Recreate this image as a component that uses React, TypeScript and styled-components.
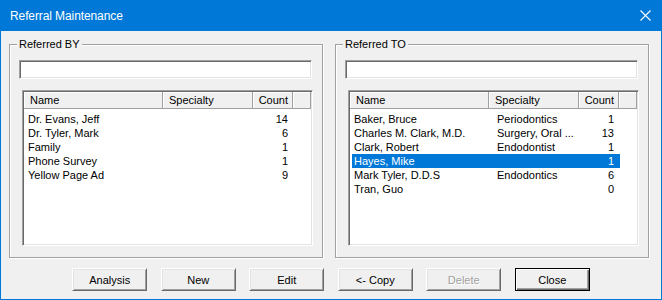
import React from 'react';
import styled, { createGlobalStyle } from 'styled-components';

const GlobalStyle = createGlobalStyle`
  html, body {
    margin: 0;
    padding: 0;
    background: #f0f0f0;
  }
  body {
    font-family: 'Liberation Sans', Arial, sans-serif;
    font-size: 11px;
    color: #000;
  }
`;

const Window = styled.div`
  width: 662px;
  height: 300px;
  box-sizing: border-box;
  border: 1px solid #0078d7;
  border-top: none;
  background: #f0f0f0;
  display: flex;
  flex-direction: column;
`;

const TitleBar = styled.div`
  height: 31px;
  flex-shrink: 0;
  background: #0078d7;
  color: #fff;
  display: flex;
  align-items: center;
  padding-left: 9px;
  font-size: 12px;
  letter-spacing: -0.1px;
`;

const CloseGlyph = styled.svg`
  margin-left: auto;
  margin-right: 10px;
  width: 11px;
  height: 11px;
`;

const Body = styled.div`
  flex: 1;
  display: flex;
  flex-direction: column;
  padding: 13px 0 0 8px;
`;

const Groups = styled.div`
  display: flex;
  gap: 12px;
`;

const Group = styled.div`
  position: relative;
  width: 314px;
  height: 214px;
  box-sizing: border-box;
  border: 1px solid #a0a0a0;
  box-shadow: inset 1px 1px 0 #fff, 1px 1px 0 #fff;
  padding: 15px 10px 0 9px;
  display: flex;
  flex-direction: column;
`;

const Legend = styled.span`
  position: absolute;
  top: -8px;
  left: 7px;
  padding: 0 2px;
  background: #f0f0f0;
  line-height: 14px;
`;

const TextBox = styled.input`
  height: 19px;
  box-sizing: border-box;
  margin: 0;
  width: 100%;
  border: 1px solid;
  border-color: #a0a0a0 #fff #fff #a0a0a0;
  box-shadow: inset 1px 1px 0 #696969, inset -1px -1px 0 #e3e3e3;
  background: #fff;
  outline: none;
  padding: 0 4px;
  font: inherit;
`;

const ListView = styled.div`
  margin: 11px 0 0 3px;
  width: 291px;
  height: 156px;
  box-sizing: border-box;
  border: 1px solid;
  border-color: #a0a0a0 #fff #fff #a0a0a0;
  box-shadow: inset 1px 1px 0 #696969, inset -1px -1px 0 #e3e3e3;
  background: #fff;
  padding: 1px;
  overflow: hidden;
`;

const HeaderRow = styled.div`
  display: grid;
  grid-template-columns: 139px 90px 40px 1fr;
  height: 17px;
  background: #f0f0f0;
`;

const HeaderCell = styled.div<{ $align?: 'left' | 'right' }>`
  box-sizing: border-box;
  height: 17px;
  line-height: 16px;
  text-align: ${p => p.$align || 'left'};
  padding: ${p => (p.$align === 'right' ? '0 4px 0 0' : '0 0 0 6px')};
  border-right: 1px solid #a0a0a0;
  border-bottom: 1px solid #a0a0a0;
  box-shadow: inset 1px 1px 0 #fff;
  white-space: nowrap;
  overflow: hidden;
`;

const Rows = styled.div`
  padding-top: 3px;
`;

const Row = styled.div<{ $selected?: boolean }>`
  display: grid;
  grid-template-columns: 137px 90px 41px;
  width: 268px;
  margin-left: 2px;
  height: 14px;
  line-height: 14px;
  background: ${p => (p.$selected ? '#0078d7' : 'transparent')};
  color: ${p => (p.$selected ? '#fff' : '#000')};
`;

const Cell = styled.div<{ $align?: 'left' | 'right'; $pad: number }>`
  text-align: ${p => p.$align || 'left'};
  padding-left: ${p => (p.$align === 'right' ? 0 : p.$pad)}px;
  padding-right: ${p => (p.$align === 'right' ? p.$pad : 0)}px;
  white-space: nowrap;
  overflow: hidden;
`;

const Footer = styled.div`
  display: flex;
  justify-content: center;
  gap: 13.5px;
  margin-top: 10px;
  padding-right: 8px;
`;

const Button = styled.button<{ $default?: boolean }>`
  width: 75px;
  height: 23px;
  box-sizing: border-box;
  margin: 0;
  padding: 0;
  background: #f0f0f0;
  font: inherit;
  color: #000;
  border: 1px solid;
  border-color: ${p => (p.$default ? '#000' : '#fff #696969 #696969 #fff')};
  box-shadow: ${p =>
    p.$default
      ? 'inset 1px 1px 0 #fff, inset -1px -1px 0 #696969, inset -2px -2px 0 #a0a0a0'
      : 'inset 1px 1px 0 #e3e3e3, inset -1px -1px 0 #a0a0a0'};
  &:disabled {
    color: #a0a0a0;
    text-shadow: 1px 1px 0 #fff;
  }
`;

type Item = { name: string; specialty: string; count: number; selected?: boolean };

const referredBy: Item[] = [
  { name: 'Dr. Evans, Jeff', specialty: '', count: 14 },
  { name: 'Dr. Tyler, Mark', specialty: '', count: 6 },
  { name: 'Family', specialty: '', count: 1 },
  { name: 'Phone Survey', specialty: '', count: 1 },
  { name: 'Yellow Page Ad', specialty: '', count: 9 },
];

const referredTo: Item[] = [
  { name: 'Baker, Bruce', specialty: 'Periodontics', count: 1 },
  { name: 'Charles M. Clark, M.D.', specialty: 'Surgery, Oral ...', count: 13 },
  { name: 'Clark, Robert', specialty: 'Endodontist', count: 1 },
  { name: 'Hayes, Mike', specialty: '', count: 1, selected: true },
  { name: 'Mark Tyler, D.D.S', specialty: 'Endodontics', count: 6 },
  { name: 'Tran, Guo', specialty: '', count: 0 },
];

const ReferralList: React.FC<{ title: string; items: Item[] }> = ({ title, items }) => (
  <Group>
    <Legend>{title}</Legend>
    <TextBox />
    <ListView>
      <HeaderRow>
        <HeaderCell>Name</HeaderCell>
        <HeaderCell>Specialty</HeaderCell>
        <HeaderCell $align="right">Count</HeaderCell>
        <HeaderCell />
      </HeaderRow>
      <Rows>
        {items.map(it => (
          <Row key={it.name} $selected={it.selected}>
            <Cell $pad={2}>{it.name}</Cell>
            <Cell $pad={8}>{it.specialty}</Cell>
            <Cell $align="right" $pad={6}>{it.count}</Cell>
          </Row>
        ))}
      </Rows>
    </ListView>
  </Group>
);

export default function App() {
  return (
    <>
      <GlobalStyle />
      <Window>
        <TitleBar>
          Referral Maintenance
          <CloseGlyph viewBox="0 0 11 11">
            <path d="M0.5 0.5 L10.5 10.5 M10.5 0.5 L0.5 10.5" stroke="#fff" strokeWidth="1.1" />
          </CloseGlyph>
        </TitleBar>
        <Body>
          <Groups>
            <ReferralList title="Referred BY" items={referredBy} />
            <ReferralList title="Referred TO" items={referredTo} />
          </Groups>
          <Footer>
            <Button>Analysis</Button>
            <Button>New</Button>
            <Button>Edit</Button>
            <Button>&lt;- Copy</Button>
            <Button disabled>Delete</Button>
            <Button $default>Close</Button>
          </Footer>
        </Body>
      </Window>
    </>
  );
}
